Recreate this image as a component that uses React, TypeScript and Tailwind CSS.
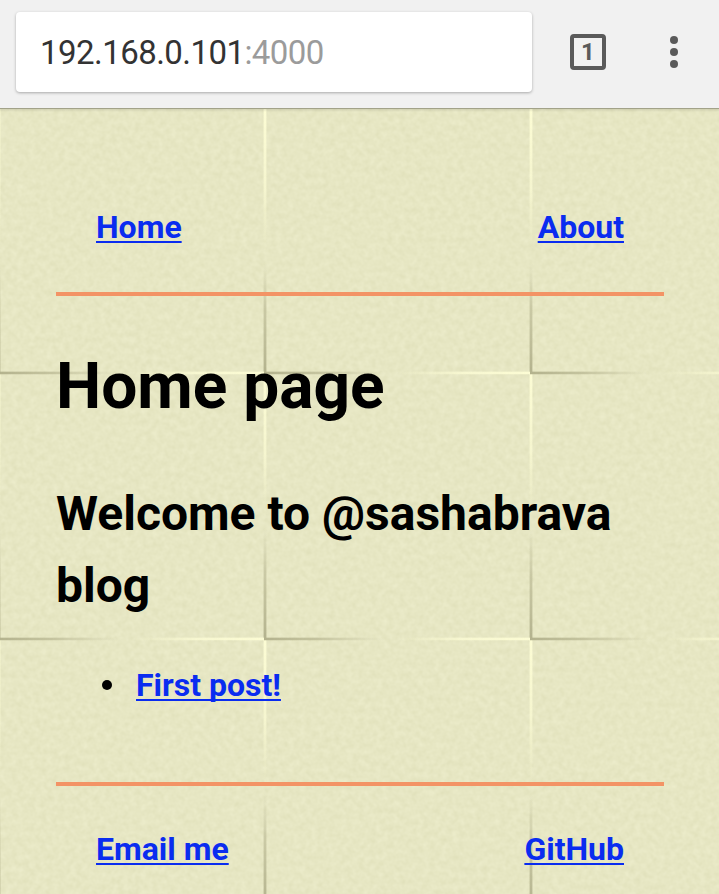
import type { ReactNode } from 'react';

function PaperTiles() {
  return (
    <svg className="absolute inset-0 h-full w-full" aria-hidden="true">
      <defs>
        <filter id="grain" x="0" y="0" width="100%" height="100%" colorInterpolationFilters="sRGB">
          <feTurbulence type="fractalNoise" baseFrequency="0.17" numOctaves="2" seed="7" />
          <feColorMatrix values="0.055 0 0 0 0.876  0.055 0 0 0 0.876  0.075 0 0 0 0.727  0 0 0 0 1" />
        </filter>
        <linearGradient id="seamY" x1="0" y1="0" x2="0" y2="1">
          <stop offset="0" stopColor="#fcfcd4" />
          <stop offset="0.3" stopColor="#fafad3" stopOpacity="0.75" />
          <stop offset="0.54" stopColor="#f4f4cc" stopOpacity="0" />
          <stop offset="0.58" stopColor="#c4c3a0" stopOpacity="0" />
          <stop offset="0.75" stopColor="#bebd98" stopOpacity="0.7" />
          <stop offset="1" stopColor="#b3b28d" />
        </linearGradient>
        <linearGradient id="seamX" x1="0" y1="0" x2="1" y2="0">
          <stop offset="0" stopColor="#b3b28d" />
          <stop offset="0.2" stopColor="#bebd98" stopOpacity="0.85" />
          <stop offset="0.45" stopColor="#c4c3a0" stopOpacity="0" />
          <stop offset="0.5" stopColor="#f8f8d0" stopOpacity="0" />
          <stop offset="0.75" stopColor="#fafad3" stopOpacity="0.85" />
          <stop offset="1" stopColor="#fcfcd4" />
        </linearGradient>
        <pattern id="tile" x="-2" y="0" width="266" height="266" patternUnits="userSpaceOnUse">
          <rect x="0" y="0" width="2" height="266" fill="url(#seamY)" />
          <rect x="2" y="0" width="1" height="266" fill="url(#seamY)" opacity="0.4" />
          <rect x="265" y="0" width="1" height="266" fill="url(#seamY)" opacity="0.4" />
          <rect x="0" y="264" width="266" height="2" fill="url(#seamX)" />
          <rect x="0" y="263" width="266" height="1" fill="url(#seamX)" opacity="0.35" />
          <rect x="0" y="0" width="266" height="1" fill="url(#seamX)" opacity="0.25" />
        </pattern>
      </defs>
      <rect width="100%" height="100%" filter="url(#grain)" />
      <rect width="100%" height="100%" fill="url(#tile)" />
    </svg>
  );
}

function PageLink({ children }: { children: ReactNode }) {
  return (
    <a href="#" className="text-[#0a2cf0] underline decoration-2 underline-offset-[3px] [text-decoration-skip-ink:none]">
      {children}
    </a>
  );
}

export default function App() {
  return (
    <div className="flex h-[894px] w-full flex-col overflow-hidden font-[Roboto,sans-serif]">
      <header className="flex h-[108px] shrink-0 items-start bg-[#f1f1f1] pt-3 pl-4">
        <div className="flex h-20 w-[516px] items-center rounded bg-white pt-0.5 pl-6 text-[33px] tracking-[-0.55px] text-[#333] shadow-[0_1px_3px_rgba(0,0,0,0.3)]">
          <span>192.168.0.101</span>
          <span className="text-[#9b9b9b]">:4000</span>
        </div>
        <div className="mt-[22px] ml-[38px] flex size-9 items-center justify-center rounded border-4 border-[#5a5a5a] text-2xl font-bold text-[#5a5a5a]">
          1
        </div>
        <div className="mt-6 ml-16 flex flex-col gap-1">
          <i className="size-2 rounded-full bg-[#5a5a5a]" />
          <i className="size-2 rounded-full bg-[#5a5a5a]" />
          <i className="size-2 rounded-full bg-[#5a5a5a]" />
        </div>
      </header>
      <main className="relative flex-1 bg-[#e8e8c4]">
        <PaperTiles />
        <div className="absolute inset-x-0 top-0 h-1 border-t border-[#a2a289] bg-linear-to-b from-black/10 to-transparent" />
        <div className="relative ml-14 w-[608px] pt-[95px] text-[32px] leading-[48px] font-bold text-black">
          <nav className="flex justify-between px-10">
            <PageLink>Home</PageLink>
            <PageLink>About</PageLink>
          </nav>
          <hr className="mt-[41px] border-0 border-t-4 border-[#f39365]" />
          <h1 className="mt-[43px] text-[64px] leading-[96px]">Home page</h1>
          <h2 className="mt-[43px] text-[48px] leading-[72px]">Welcome to @sashabrava blog</h2>
          <ul className="mt-[39px]">
            <li className="flex items-center pl-[46px]">
              <i className="mr-[24px] size-2.5 rounded-full bg-black" />
              <PageLink>First post!</PageLink>
            </li>
          </ul>
          <hr className="mt-[73px] border-0 border-t-4 border-[#f39365]" />
          <footer className="mt-[39px] flex justify-between px-10">
            <PageLink>Email me</PageLink>
            <PageLink>GitHub</PageLink>
          </footer>
        </div>
      </main>
    </div>
  );
}
